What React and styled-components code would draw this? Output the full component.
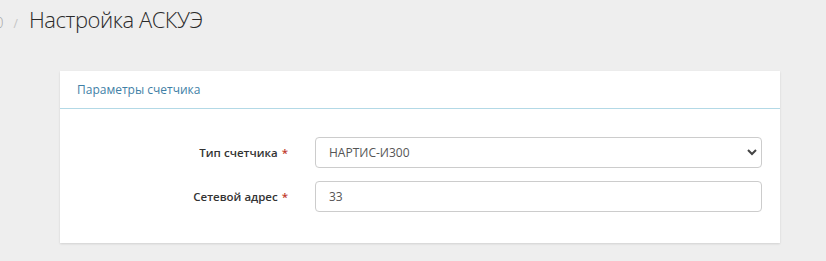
import React from "react";
import styled, { createGlobalStyle } from "styled-components";

const Global = createGlobalStyle`
  html, body { margin: 0; padding: 0; background: #eeeeee; }
  body { font-family: "Open Sans", "Liberation Sans", sans-serif; color: #333; overflow: hidden; }
  * { box-sizing: border-box; }
`;

const Page = styled.div`
  width: 826px;
  height: 261px;
  overflow: hidden;
  background: #eeeeee;
`;

const Breadcrumb = styled.div`
  display: flex;
  align-items: baseline;
  height: 44px;
  padding-top: 4px;
  margin-left: -5px;
  white-space: nowrap;
`;

const Crumb = styled.span`
  font-size: 15px;
  color: #a8a8a8;
  font-weight: 300;
`;

const Sep = styled.span`
  font-size: 12px;
  color: #c4c4c4;
  margin: 0 11px 0 10px;
`;

const Title = styled.h1`
  margin: 0;
  font-size: 22px;
  font-weight: 300;
  color: #2a2a2a;
  letter-spacing: -0.45px;
`;

const Card = styled.section`
  margin: 27px 46px 0 60px;
  background: #fff;
  box-shadow: 0 1px 2px rgba(0, 0, 0, 0.12);
`;

const CardHeader = styled.div`
  height: 38px;
  display: flex;
  align-items: center;
  padding: 0 17px;
  border-bottom: 1px solid #b3d9e6;
  font-size: 12px;
  color: #3f7fa6;
`;

const CardBody = styled.div`
  display: grid;
  grid-template-columns: 1fr 447px;
  column-gap: 27px;
  row-gap: 13px;
  align-items: center;
  padding: 28px 18px 31px 18px;
`;

const Label = styled.label`
  justify-self: end;
  font-size: 11.5px;
  font-weight: 600;
  color: #333;
`;

const Req = styled.span`
  color: #c0392b;
  margin-left: 4px;
`;

const SelectWrap = styled.div`
  position: relative;
`;

const Select = styled.select`
  appearance: none;
  width: 100%;
  height: 31px;
  border: 1px solid #cccccc;
  border-radius: 4px;
  background: #fff;
  padding: 0 30px 0 13px;
  font-family: inherit;
  font-size: 12px;
  color: #555;
  outline: none;
`;

const Chevron = styled.svg`
  position: absolute;
  right: 5px;
  top: 11px;
  width: 10px;
  height: 8px;
  pointer-events: none;
`;

const Input = styled.input`
  width: 100%;
  height: 31px;
  border: 1px solid #cccccc;
  border-radius: 4px;
  background: #fff;
  padding: 0 13px;
  font-family: inherit;
  font-size: 12px;
  color: #555;
  outline: none;
`;

export default function App() {
  return (
    <Page>
      <Global />
      <Breadcrumb>
        <Crumb>0</Crumb>
        <Sep>/</Sep>
        <Title>Настройка АСКУЭ</Title>
      </Breadcrumb>
      <Card>
        <CardHeader>Параметры счетчика</CardHeader>
        <CardBody>
          <Label>
            Тип счетчика<Req>*</Req>
          </Label>
          <SelectWrap>
            <Select defaultValue="nartis">
              <option value="nartis">НАРТИС-И300</option>
            </Select>
            <Chevron viewBox="0 0 10 8">
              <path d="M1 2 L5 6 L9 2" fill="none" stroke="#444" strokeWidth="2" />
            </Chevron>
          </SelectWrap>
          <Label>
            Сетевой адрес<Req>*</Req>
          </Label>
          <Input defaultValue="33" />
        </CardBody>
      </Card>
    </Page>
  );
}
